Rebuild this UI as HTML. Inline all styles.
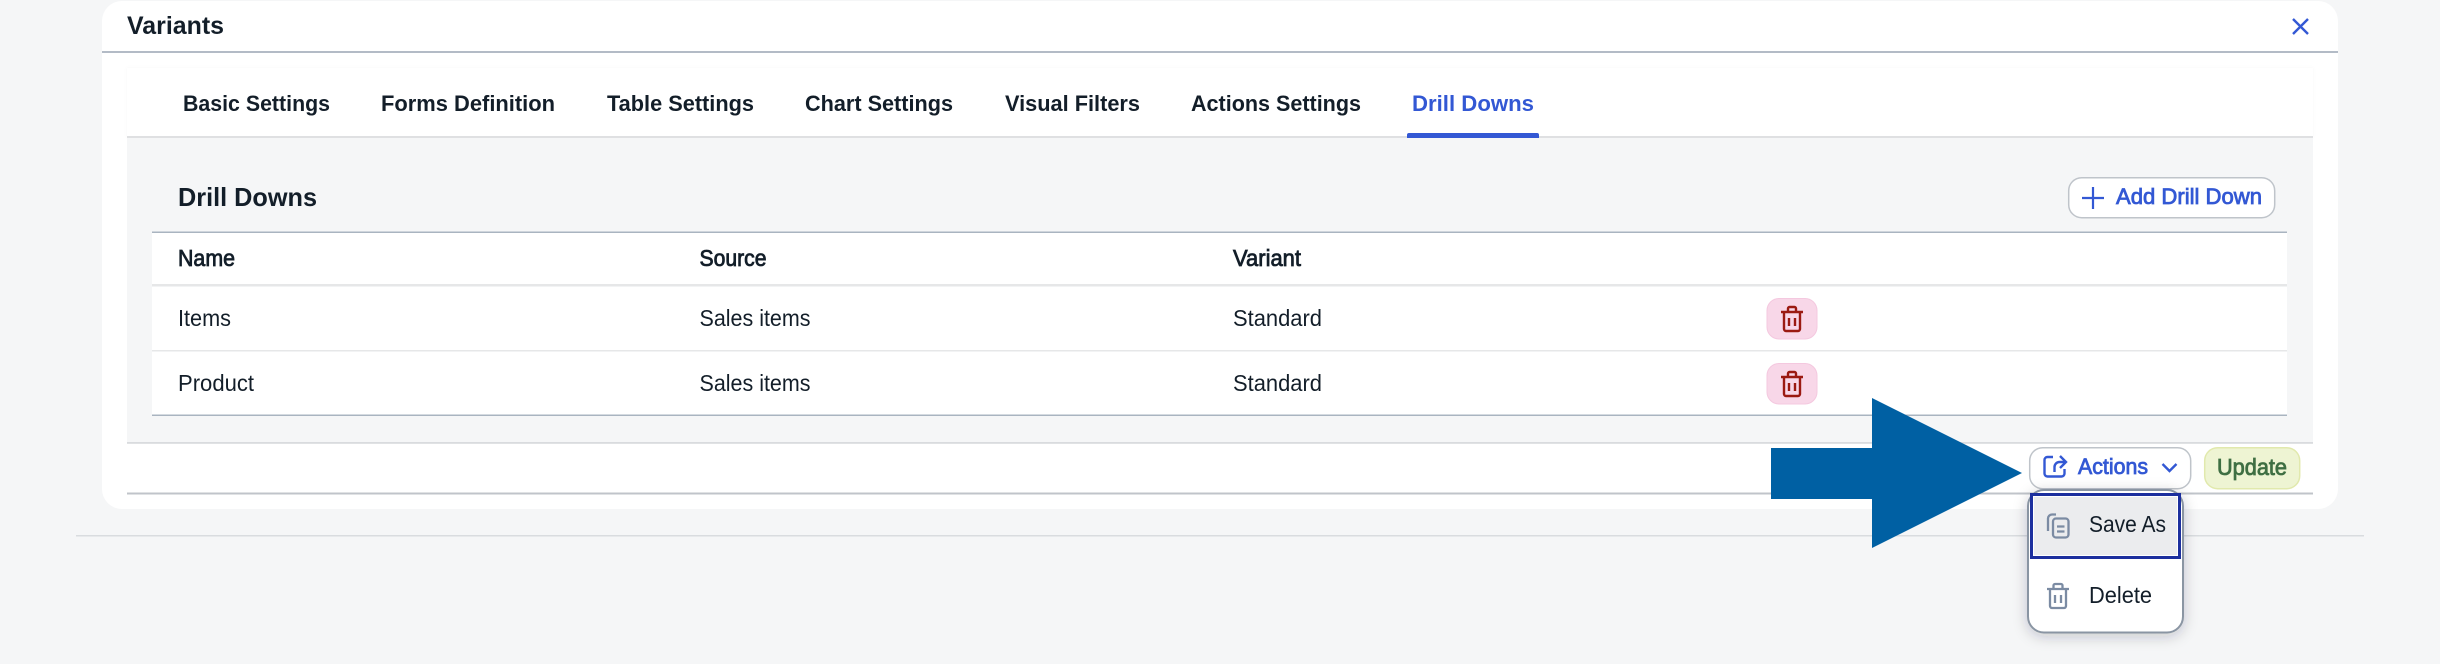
<!DOCTYPE html>
<html><head><meta charset="utf-8"><title>Variants</title>
<style>
html,body{margin:0;padding:0;background:#f5f6f7;width:2440px;height:664px;overflow:hidden}
svg{display:block}
text{font-family:"Liberation Sans",sans-serif;fill:#131e29;font-size:23px}
.b{font-weight:bold;font-size:22.500px}
.m{stroke:#131e29;stroke-width:.8px}
.blue{fill:#3358d4}
.bm{fill:#3358d4;stroke:#3358d4;stroke-width:.8px;font-size:22px}
</style></head><body>
<svg width="2440" height="664" viewBox="0 0 2440 664" xmlns="http://www.w3.org/2000/svg">
<defs>
<filter id="sh" x="-20%" y="-20%" width="140%" height="140%"><feDropShadow dx="0" dy="3" stdDeviation="7" flood-color="#223" flood-opacity=".22"/></filter>
<filter id="sh2" x="-2%" y="-10%" width="104%" height="130%"><feDropShadow dx="0" dy="0" stdDeviation="1.500" flood-color="#223" flood-opacity=".03"/></filter>
<g id="trash" fill="none" stroke="#9b1a12" stroke-width="2.400">
<path d="M0 6H22"/><path d="M7 6V2.500a1.500 1.500 0 0 1 1.500-1.500h5a1.500 1.500 0 0 1 1.500 1.500V6"/>
<path d="M3 6V23a2 2 0 0 0 2 2h12a2 2 0 0 0 2-2V6"/><path d="M8 12V20M14 12V20"/>
</g>
</defs>
<rect width="2440" height="664" fill="#f5f6f7"/>
<rect x="76" y="535" width="2288" height="1.500" fill="#d9dcdf"/>
<!-- card -->
<rect x="102" y="1" width="2236" height="508" rx="20" fill="#fff"/>
<rect x="102" y="51" width="2236" height="2" fill="#b3bbc6"/>
<text x="127" y="34" class="b" style="font-size:25px" textLength="97" lengthAdjust="spacingAndGlyphs">Variants</text>
<path d="M2293 19L2308 34M2308 19L2293 34" stroke="#3358d4" stroke-width="2.400" fill="none"/>
<!-- tabs -->
<rect x="127" y="68" width="2186" height="69" fill="#fff" filter="url(#sh2)"/>
<rect x="127" y="137" width="2186" height="305" fill="#f5f6f7"/>
<rect x="127" y="136" width="2186" height="2" fill="#dfe0e2"/>
<text x="183" y="111" class="b" textLength="147" lengthAdjust="spacingAndGlyphs">Basic Settings</text>
<text x="381" y="111" class="b" textLength="174" lengthAdjust="spacingAndGlyphs">Forms Definition</text>
<text x="607" y="111" class="b" textLength="147" lengthAdjust="spacingAndGlyphs">Table Settings</text>
<text x="805" y="111" class="b" textLength="148" lengthAdjust="spacingAndGlyphs">Chart Settings</text>
<text x="1005" y="111" class="b" textLength="135" lengthAdjust="spacingAndGlyphs">Visual Filters</text>
<text x="1191" y="111" class="b" textLength="170" lengthAdjust="spacingAndGlyphs">Actions Settings</text>
<text x="1412" y="111" class="b blue" textLength="122" lengthAdjust="spacingAndGlyphs">Drill Downs</text>
<path d="M1407 138V135a2 2 0 0 1 2-2H1537a2 2 0 0 1 2 2V138Z" fill="#3358d4"/>
<!-- heading -->
<text x="178" y="206" class="b" style="font-size:26px" textLength="139" lengthAdjust="spacingAndGlyphs">Drill Downs</text>
<rect x="2068.700" y="177.700" width="206" height="40" rx="13" fill="#fff" stroke="#bfc4ca" stroke-width="1.500"/>
<path d="M2082 198H2104M2093 187V209" stroke="#3358d4" stroke-width="2.200" fill="none"/>
<text x="2116" y="204" class="bm" textLength="146" lengthAdjust="spacingAndGlyphs">Add Drill Down</text>
<!-- table -->
<rect x="152" y="232" width="2135" height="184" fill="#fff"/>
<rect x="152" y="231.500" width="2135" height="1.500" fill="#a9b4c0"/>
<rect x="152" y="284" width="2135" height="2.500" fill="#e6e7e8"/>
<rect x="152" y="350" width="2135" height="1.500" fill="#e6e7e8"/>
<rect x="152" y="414.500" width="2135" height="1.500" fill="#a9b4c0"/>
<text x="178" y="266" class="m" textLength="57" lengthAdjust="spacingAndGlyphs">Name</text>
<text x="699.500" y="266" class="m" textLength="67" lengthAdjust="spacingAndGlyphs">Source</text>
<text x="1233" y="266" class="m" textLength="68" lengthAdjust="spacingAndGlyphs">Variant</text>
<text x="178" y="326" textLength="53" lengthAdjust="spacingAndGlyphs">Items</text>
<text x="699.500" y="326" textLength="111" lengthAdjust="spacingAndGlyphs">Sales items</text>
<text x="1233" y="326" textLength="89" lengthAdjust="spacingAndGlyphs">Standard</text>
<text x="178" y="391" textLength="76" lengthAdjust="spacingAndGlyphs">Product</text>
<text x="699.500" y="391" textLength="111" lengthAdjust="spacingAndGlyphs">Sales items</text>
<text x="1233" y="391" textLength="89" lengthAdjust="spacingAndGlyphs">Standard</text>
<rect x="1767" y="298.500" width="50" height="40.500" rx="12" fill="#f8d7e8" stroke="#f4c8df" stroke-width="1"/>
<use href="#trash" x="1781" y="306"/>
<rect x="1767" y="363.500" width="50" height="40.500" rx="12" fill="#f8d7e8" stroke="#f4c8df" stroke-width="1"/>
<use href="#trash" x="1781" y="371"/>
<!-- footer -->
<rect x="127" y="442" width="2186" height="1.800" fill="#d9dbde"/>
<rect x="127" y="492.500" width="2186" height="2" fill="#c0c4ca"/>
<!-- arrow -->
<path d="M1771 448H1872V398L2022 473L1872 548V499H1771Z" fill="#0060a3"/>
<!-- actions -->
<rect x="2029.700" y="447.700" width="161" height="41" rx="13" fill="#fff" stroke="#bfc4ca" stroke-width="1.500"/>
<g fill="none" stroke="#3358d4" stroke-width="2.400">
<path d="M2053 457H2047.500a3 3 0 0 0-3 3V473.500a3 3 0 0 0 3 3H2061.500a3 3 0 0 0 3-3V469"/>
<path d="M2054.500 472V467a5 5 0 0 1 5-5H2066M2060 456L2066 462L2060 468"/>
<path d="M2162.500 464L2169.500 471L2176.500 464"/>
</g>
<text x="2078" y="474" class="bm" textLength="70" lengthAdjust="spacingAndGlyphs">Actions</text>
<!-- update -->
<rect x="2204.700" y="447.700" width="95" height="41" rx="13" fill="#eef4d3" stroke="#e1e9ad" stroke-width="1.500"/>
<text x="2217" y="475" style="fill:#3f6f43;stroke:#3f6f43;stroke-width:.8px;font-size:23px" textLength="70" lengthAdjust="spacingAndGlyphs">Update</text>
<!-- menu -->
<rect x="2028" y="490" width="155" height="142.500" rx="16" fill="#fff" stroke="#8a95a3" stroke-width="2" filter="url(#sh)"/>
<rect x="2030" y="493" width="151" height="66" fill="#fff"/>
<rect x="2031.500" y="494.500" width="148" height="63" fill="#ebecee" stroke="#1c2f9e" stroke-width="3"/>
<rect x="2033.500" y="496.500" width="144" height="59" fill="#ebecee" stroke="#fff" stroke-width="1"/>
<g fill="none" stroke="#7b8ba3" stroke-width="2.300">
<path d="M2056 514.500H2052a4 4 0 0 0-4 4V531"/>
<rect x="2053" y="518.500" width="15.500" height="19" rx="3"/>
<path d="M2057 526.500H2064.500M2057 531.500H2064.500"/>
</g>
<g fill="none" stroke="#7b8ba3" stroke-width="2.300">
<path d="M2047 589H2069M2053.500 589V585.500a1.500 1.500 0 0 1 1.500-1.500h6a1.500 1.500 0 0 1 1.500 1.500V589"/>
<path d="M2050 589V606a2 2 0 0 0 2 2h12a2 2 0 0 0 2-2V589M2055 595V603M2061 595V603"/>
</g>
<text x="2089" y="532" textLength="77" lengthAdjust="spacingAndGlyphs">Save As</text>
<text x="2089" y="603" textLength="63" lengthAdjust="spacingAndGlyphs">Delete</text>
</svg>
</body></html>
